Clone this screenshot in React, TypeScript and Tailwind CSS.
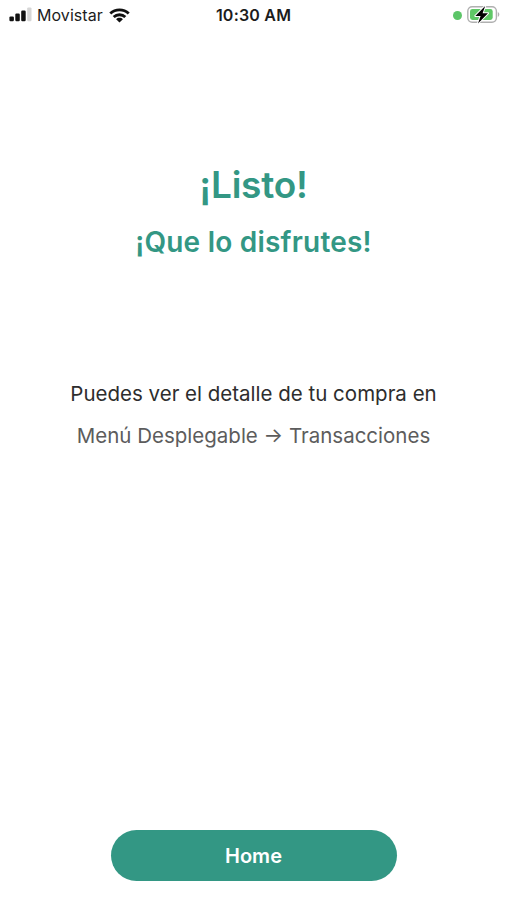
function SignalIcon() {
  return (
    <svg width="23" height="16" viewBox="0 0 23 16" className="shrink-0">
      <rect x="0.4" y="9.4" width="4.5" height="4.8" rx="1.2" fill="#111" />
      <rect x="6.3" y="6.6" width="4.5" height="7.6" rx="1.2" fill="#111" />
      <rect x="12.2" y="3.6" width="4.5" height="10.6" rx="1.2" fill="#111" />
      <rect x="18.2" y="0.4" width="4.3" height="13.8" rx="1.2" fill="#d6d6d6" />
    </svg>
  );
}

function WifiIcon() {
  return (
    <svg width="21" height="15" viewBox="0 0 21 15" className="shrink-0">
      <g fill="none" stroke="#111" strokeWidth="2.9">
        <path d="M1.3 5.5C6.4 0.7 14.6 0.7 19.7 5.5" />
        <path d="M4.7 9C7.9 6 13.1 6 16.3 9" />
      </g>
      <path d="M7.1 11.2C9 9.4 12 9.4 13.9 11.2L10.5 14.6Z" fill="#111" />
    </svg>
  );
}

function BatteryIcon() {
  return (
    <svg width="33" height="20" viewBox="0 0 33 20" className="shrink-0">
      <rect x="0.8" y="1.8" width="28.6" height="15.4" rx="4.4" fill="#fff" stroke="#b0b0b0" strokeWidth="1.4" />
      <rect x="3" y="4" width="22.7" height="11" rx="2.4" fill="#5fc866" />
      <path d="M30.8 7.1C32.8 7.9 32.8 11.1 30.8 11.9Z" fill="#b0b0b0" />
      <path
        d="M18.2 0.9L8.3 10.9H13.6L11 18.4L21 8.2H15.6Z"
        fill="#000"
        stroke="#fff"
        strokeWidth="2"
        strokeLinejoin="round"
        paintOrder="stroke"
      />
    </svg>
  );
}

function StatusBar() {
  return (
    <header className="grid h-[30px] grid-cols-[1fr_auto_1fr] items-center px-[7px] text-[#1c1c1c]">
      <div className="flex items-center pl-[2px]">
        <SignalIcon />
        <span className="ml-[5px] text-[16px] tracking-[0.05px]">Movistar</span>
        <span className="ml-[6px]">
          <WifiIcon />
        </span>
      </div>
      <span className="text-[16px] font-semibold tracking-[0.2px]">10:30 AM</span>
      <div className="flex items-center justify-end gap-[5px]">
        <span className="size-[9px] rounded-full bg-[#5cc568]" />
        <BatteryIcon />
      </div>
    </header>
  );
}

export default function App() {
  return (
    <div className="flex h-[900px] w-full flex-col bg-white font-[Inter,sans-serif] whitespace-nowrap">
      <StatusBar />
      <main className="flex flex-1 flex-col items-center text-center">
        <h1 className="mt-[131px] text-[37px] leading-[48px] font-semibold tracking-[-0.2px] text-[#339784]">¡Listo!</h1>
        <h2 className="mt-[13px] text-[28px] leading-[40px] font-semibold tracking-[0.22px] text-[#339784]">
          ¡Que lo disfrutes!
        </h2>
        <p className="mt-[116px] text-[20.5px] leading-[32px] text-[#2d2d2d]">
          Puedes ver el detalle de tu compra en
        </p>
        <p className="mt-[10px] text-[20.5px] leading-[32px] text-[#5c5c5c]">Menú Desplegable → Transacciones</p>
      </main>
      <footer className="flex justify-center pb-[19px]">
        <button className="h-[51px] w-[286px] rounded-full bg-[#339784] pt-px text-[20px] font-semibold text-white">
          Home
        </button>
      </footer>
    </div>
  );
}
